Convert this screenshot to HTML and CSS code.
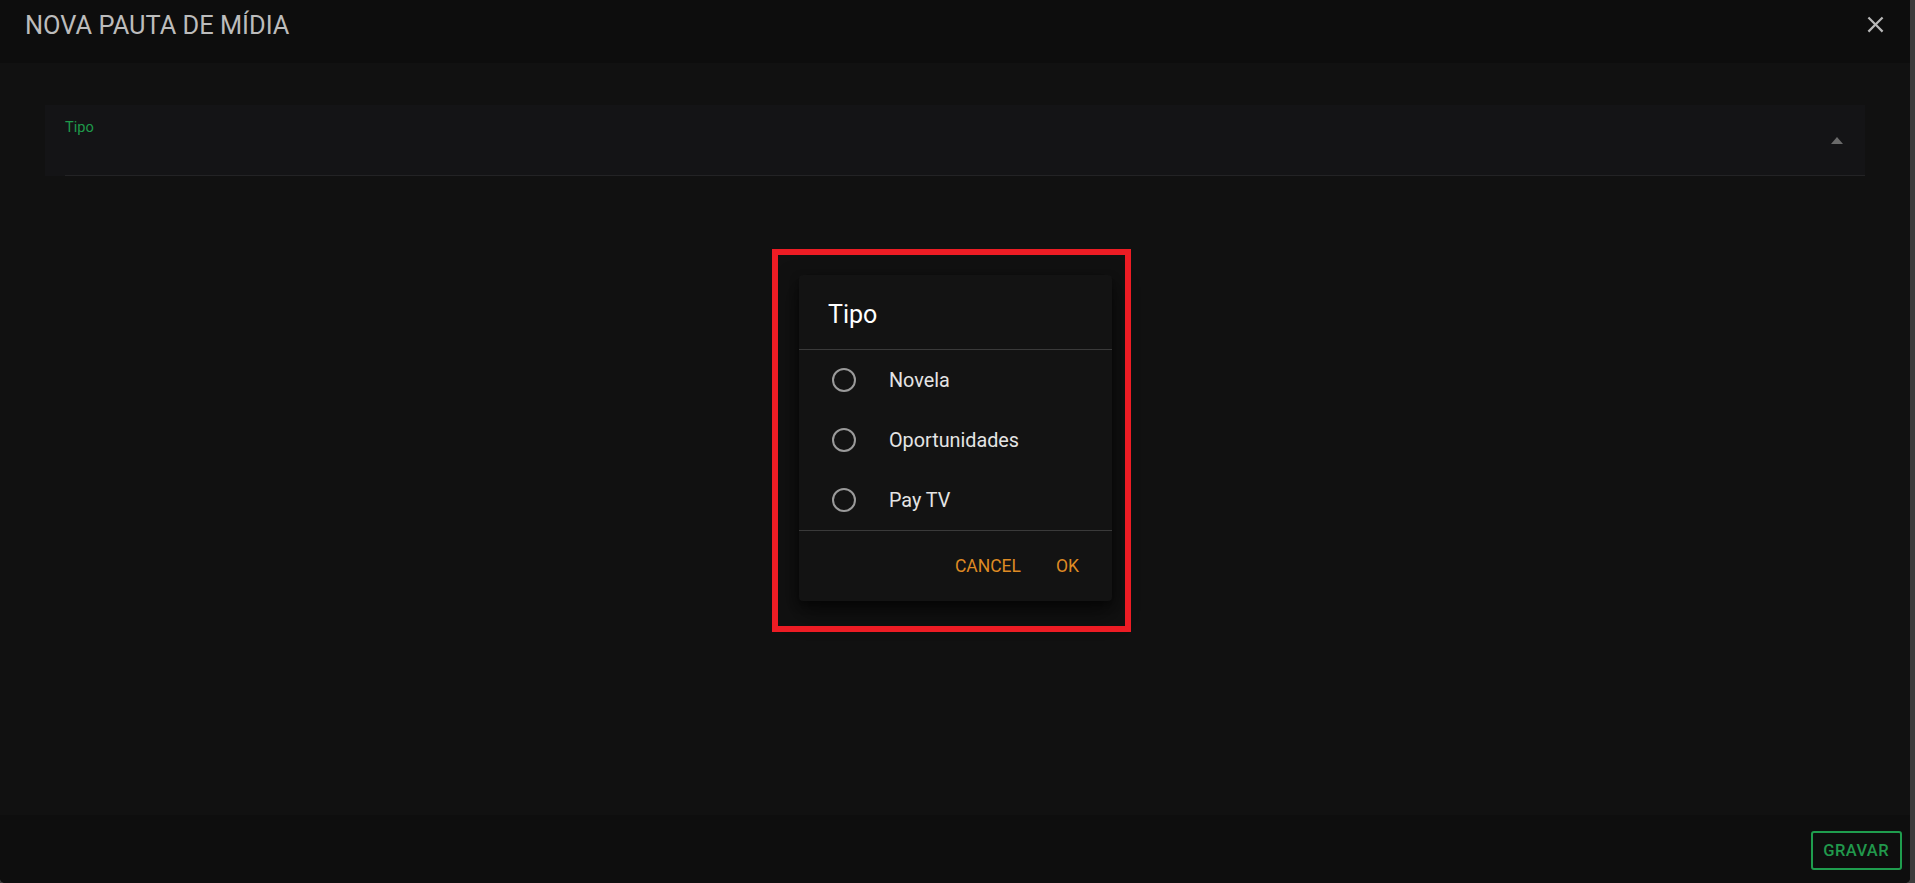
FILE: index.html
```html
<!DOCTYPE html>
<html lang="pt-BR">
<head>
<meta charset="utf-8">
<title>Nova pauta de mídia</title>
<link rel="stylesheet" href="styles.css">
</head>
<body>
<div class="dialog">
  <header class="dialog-header">
    <h1 class="dialog-title">NOVA PAUTA DE MÍDIA</h1>
    <button class="close-btn" aria-label="Fechar">
      <svg viewBox="0 0 24 24" width="27" height="27"><path d="M19,6.41L17.59,5L12,10.59L6.41,5L5,6.41L10.59,12L5,17.59L6.41,19L12,13.41L17.59,19L19,17.59L13.41,12L19,6.41Z" fill="currentColor"/></svg>
    </button>
  </header>
  <main class="dialog-content">
    <div class="field">
      <div class="field-inner">
        <span class="field-label">Tipo</span>
        <span class="field-arrow"></span>
      </div>
    </div>
  </main>
  <footer class="dialog-footer">
    <button class="btn-save">GRAVAR</button>
  </footer>

  <div class="overlay">
    <div class="picker">
      <div class="picker-title">Tipo</div>
      <div class="picker-divider"></div>
      <ul class="picker-list">
        <li class="picker-item"><svg class="radio" viewBox="0 0 24 24" width="24" height="24"><circle cx="12" cy="12" r="11" fill="none" stroke="currentColor" stroke-width="2"/></svg><span>Novela</span></li>
        <li class="picker-item"><svg class="radio" viewBox="0 0 24 24" width="24" height="24"><circle cx="12" cy="12" r="11" fill="none" stroke="currentColor" stroke-width="2"/></svg><span>Oportunidades</span></li>
        <li class="picker-item"><svg class="radio" viewBox="0 0 24 24" width="24" height="24"><circle cx="12" cy="12" r="11" fill="none" stroke="currentColor" stroke-width="2"/></svg><span>Pay TV</span></li>
      </ul>
      <div class="picker-divider"></div>
      <div class="picker-actions">
        <button class="btn-text">CANCEL</button>
        <button class="btn-text">OK</button>
      </div>
    </div>
  </div>
  <div class="highlight"></div>
</div>
</body>
</html>
```

FILE: styles.css
```css
* { box-sizing: border-box; }

html, body {
  margin: 0;
  padding: 0;
}

body {
  width: 1915px;
  height: 883px;
  overflow: hidden;
  background: #3c3c3c;
  font-family: Roboto, "Noto Sans", "Liberation Sans", sans-serif;
}

.dialog {
  position: relative;
  width: 1910px;
  height: 883px;
  display: flex;
  flex-direction: column;
  background: #111111;
  border-radius: 0 0 5px 5px;
  overflow: hidden;
}

.dialog-header {
  height: 63px;
  flex: none;
  display: flex;
  justify-content: space-between;
  align-items: flex-start;
  background: #0d0d0d;
  padding: 9px 21px 0 25px;
}

.dialog-title {
  margin: 0;
  font-size: 25.4px;
  line-height: 32px;
  font-weight: 400;
  color: #bcbcbc;
}

.close-btn {
  margin-top: 2px;
  padding: 0;
  border: 0;
  background: none;
  color: #b8b8b8;
  width: 27px;
  height: 27px;
  display: flex;
}

.dialog-content {
  flex: 1;
  padding: 42px 45px 0 45px;
  background: #111111;
}

.field {
  background: #141416;
  padding-left: 20px;
}

.field-inner {
  height: 71px;
  display: flex;
  justify-content: space-between;
  border-bottom: 1px solid #232325;
}

.field-label {
  padding-top: 13px;
  font-size: 14.6px;
  line-height: 18px;
  color: #1f9a4b;
}

.field-arrow {
  align-self: center;
  margin-right: 22px;
  margin-top: 1px;
  width: 0;
  height: 0;
  border-left: 6px solid transparent;
  border-right: 6px solid transparent;
  border-bottom: 7px solid #6a6a6a;
}

.dialog-footer {
  height: 68px;
  flex: none;
  background: #0e0e0e;
  display: flex;
  justify-content: flex-end;
  align-items: center;
  padding: 3px 8px 0 0;
}

.btn-save {
  height: 39px;
  padding: 0 11px 0 10px;
  border: 2px solid #1f9d4e;
  border-radius: 3px;
  background: transparent;
  color: #21984c;
  font-family: Roboto, "Noto Sans", sans-serif;
  font-size: 16.5px;
  font-weight: 500;
  letter-spacing: 0.4px;
}

/* modal picker */
.overlay {
  position: absolute;
  inset: 0;
  display: flex;
  align-items: center;
  justify-content: center;
  padding: 0 0 7px 1px;
}

.picker {
  width: 313px;
  background: #131313;
  border-radius: 4px;
  box-shadow: 0 11px 24px rgba(0, 0, 0, 0.55), 0 4px 10px rgba(0, 0, 0, 0.4);
}

.picker-title {
  padding: 24px 29px 18px;
  font-size: 25px;
  line-height: 32px;
  font-weight: 400;
  color: #ffffff;
}

.picker-divider {
  height: 1px;
  background: #3a3a3a;
}

.picker-list {
  list-style: none;
  margin: 0;
  padding: 0;
}

.picker-item {
  height: 60px;
  display: flex;
  align-items: center;
  padding-left: 33px;
  gap: 33px;
  font-size: 19.8px;
  color: #e4e4e4;
}

.radio {
  color: #9a9a9a;
  flex: none;
}

.picker-actions {
  height: 70px;
  display: flex;
  justify-content: flex-end;
  align-items: center;
  gap: 15px;
  padding: 0 23px 0 0;
}

.btn-text {
  padding: 0 10px;
  height: 44px;
  border: 0;
  background: none;
  color: #de8a23;
  font-family: Roboto, "Noto Sans", sans-serif;
  font-size: 17.5px;
  font-weight: 400;
}

.highlight {
  position: absolute;
  left: 772px;
  top: 249px;
  width: 359px;
  height: 383px;
  border: 6px solid #ed1c24;
  pointer-events: none;
}
```
